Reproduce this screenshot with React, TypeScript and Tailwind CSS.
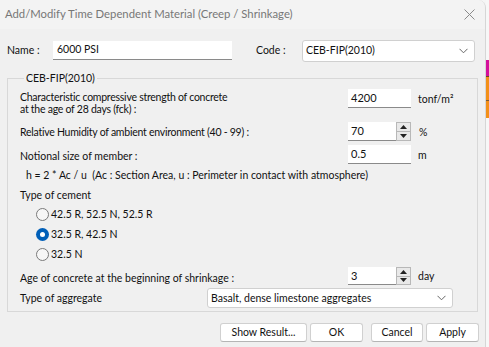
import React from "react";

const font = { fontFamily: 'Lato, "Noto Sans", Arial, sans-serif' };

function Spinner() {
  return (
    <div className="flex flex-col w-[15px] h-full border border-[#b8b8b8] bg-[#e9e9e9]">
      <div className="flex-1 flex items-center justify-center border-b border-[#b8b8b8]">
        <svg width="7" height="4" viewBox="0 0 7 4"><path d="M0 4 L3.5 0 L7 4 Z" fill="#222" /></svg>
      </div>
      <div className="flex-1 flex items-center justify-center">
        <svg width="7" height="4" viewBox="0 0 7 4"><path d="M0 0 L3.5 4 L7 0 Z" fill="#222" /></svg>
      </div>
    </div>
  );
}

function TextBox({ value, spin, h = "h-[19px]" }: { value: string; spin?: boolean; h?: string }) {
  return (
    <div className={`flex w-[63px] shrink-0 ${h}`}>
      <div className="flex-1 bg-white border-b border-[#8a8a8a] flex items-center pl-[3px] text-[11px] text-[#111]">
        {value}
      </div>
      {spin && <Spinner />}
    </div>
  );
}

function Chevron() {
  return (
    <svg width="9" height="6" viewBox="0 0 9 6" className="shrink-0">
      <path d="M0.5 0.8 L4.5 4.8 L8.5 0.8" fill="none" stroke="#666" strokeWidth="1" />
    </svg>
  );
}

function Radio({ checked, label }: { checked?: boolean; label: string }) {
  return (
    <div className="flex items-center h-[20px] pl-[16px]">
      {checked ? (
        <div className="w-[13px] h-[13px] rounded-full bg-[#005fb8] flex items-center justify-center">
          <div className="w-[5px] h-[5px] rounded-full bg-white" />
        </div>
      ) : (
        <div className="w-[13px] h-[13px] rounded-full border border-[#7a7a7a] bg-[#f7f7f7]" />
      )}
      <span className="ml-[2px] text-[10.5px] text-[#111]">{label}</span>
    </div>
  );
}

function Button({ children, w }: { children: React.ReactNode; w: string }) {
  return (
    <div className={`${w} h-[19px] bg-white border border-[#d0d0d0] border-b-[#b5b5b5] rounded-[3px] flex items-center justify-center text-[10.5px] text-[#111]`}>
      {children}
    </div>
  );
}

export default function App() {
  return (
    <div className="w-[489px] h-[347px] flex bg-[#f5f5f5] overflow-hidden" style={font}>
      <div className="w-[486px] h-full flex flex-col bg-[#f0f0f0] border-r border-[#d6d6d6] rounded-tr-[8px] overflow-hidden">
        {/* Title bar */}
        <div className="h-[29px] shrink-0 flex items-center pl-[5px] pr-[10px] bg-[#f3f3f3]">
          <span className="flex-1 text-[11.3px] text-[#777]">Add/Modify Time Dependent Material (Creep / Shrinkage)</span>
          <svg width="11" height="11" viewBox="0 0 11 11">
            <path d="M0.5 0.5 L10.5 10.5 M10.5 0.5 L0.5 10.5" stroke="#8a8a8a" strokeWidth="1" />
          </svg>
        </div>

        {/* Name row */}
        <div className="mt-[11px] flex items-center h-[21px] text-[10.5px] text-[#111]">
          <span className="pl-[7px] w-[53px]">Name :</span>
          <div className="w-[179px] h-[19px] bg-white border-b border-[#8a8a8a] flex items-center pl-[4px]">6000 PSI</div>
          <span className="ml-[24px] w-[46px]">Code :</span>
          <div className="w-[173px] h-[22px] bg-white border border-[#d0d0d0] rounded-[3px] flex items-center pl-[3px] pr-[6px]">
            <span className="flex-1">CEB-FIP(2010)</span>
            <Chevron />
          </div>
        </div>

        {/* Group box */}
        <fieldset className="mt-[10px] ml-[7px] w-[471px] h-[241px] border border-[#d8d8d8] pl-[12px] pb-0">
          <legend className="ml-[4px] px-[2px] text-[10.5px] text-[#111] leading-[14px]">CEB-FIP(2010)</legend>
          <div className="flex flex-col text-[10.5px] text-[#111] leading-[12px]">
            {/* row 1 */}
            <div className="mt-[4px] flex items-start">
              <div className="flex-1 pt-[3px] tracking-[-0.25px]">
                <div className="leading-[11.5px]">Characteristic compressive strength of concrete</div>
                <div className="leading-[11.5px]">at the age of 28 days (fck) :</div>
              </div>
              <TextBox value="4200" />
              <span className="ml-[7px] w-[59px] pt-[4px]">tonf/m²</span>
            </div>
            {/* row 2 */}
            <div className="mt-[7px] flex items-center h-[19px]">
              <div className="flex-1 pt-[1px] tracking-[-0.25px]">Relative Humidity of ambient environment (40 - 99) :</div>
              <TextBox value="70" spin />
              <span className="ml-[8px] w-[58px]">%</span>
            </div>
            {/* row 3 */}
            <div className="mt-[4px] flex items-center h-[19px]">
              <div className="flex-1 pt-[2px]">Notional size of member :</div>
              <TextBox value="0.5" />
              <span className="ml-[7px] w-[59px]">m</span>
            </div>
            <div className="mt-[2px] h-[18px] flex items-center pl-[6px]">
              h = 2 * Ac / u&nbsp;&nbsp;(Ac : Section Area, u : Perimeter in contact with atmosphere)
            </div>
            <div className="mt-[1px] h-[19px] flex items-center">Type of cement</div>
            <Radio label="42.5 R, 52.5 N, 52.5 R" />
            <Radio checked label="32.5 R, 42.5 N" />
            <Radio label="32.5 N" />
            {/* age row */}
            <div className="mt-[3px] flex items-center h-[18px]">
              <div className="flex-1 pt-[3px]">Age of concrete at the beginning of shrinkage :</div>
              <TextBox value="3" spin h="h-[18px]" />
              <span className="ml-[7px] w-[59px]">day</span>
            </div>
            {/* aggregate */}
            <div className="mt-[3px] flex items-center h-[20px]">
              <div className="w-[187px]">Type of aggregate</div>
              <div className="w-[246px] h-[20px] bg-white border border-[#d0d0d0] rounded-[3px] flex items-center pl-[3px] pr-[6px]">
                <span className="flex-1">Basalt, dense limestone aggregates</span>
                <Chevron />
              </div>
            </div>
          </div>
        </fieldset>

        {/* Buttons */}
        <div className="mt-[11px] flex pl-[220px] gap-[3px]">
          <Button w="w-[87px]">Show Result...</Button>
          <Button w="w-[53px]">OK</Button>
          <div className="w-[2px]" />
          <Button w="w-[52px]">Cancel</Button>
          <Button w="w-[53px]">Apply</Button>
        </div>
      </div>
      {/* outside strip */}
      <div className="flex-1 flex flex-col">
        <div className="h-[60px] bg-[#f7f7f7]" />
        <div className="h-[16px] bg-[#d4109c]" />
        <div className="h-[1px] bg-[#6a4a20]" />
        <div className="h-[23px] bg-[#f39019]" />
        <div className="h-[1px] bg-[#7a5a30]" />
        <div className="h-[17px] bg-[#f39019]" />
        <div className="flex-1 bg-[#f7f7f7]" />
      </div>
    </div>
  );
}
